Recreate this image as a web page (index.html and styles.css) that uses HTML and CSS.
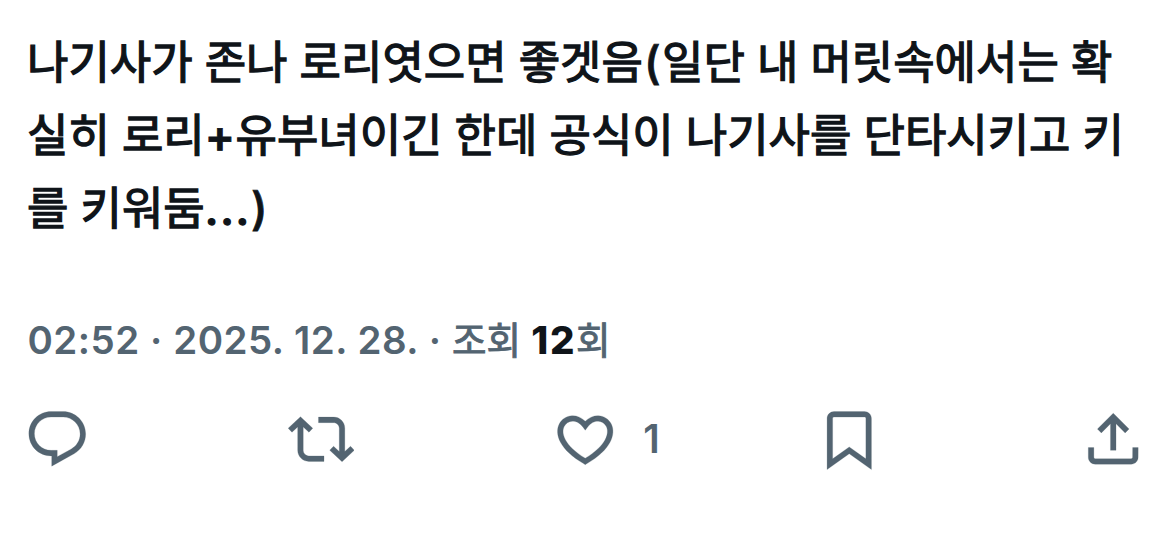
FILE: index.html
```html
<!DOCTYPE html>
<html lang="ko">
<head>
<meta charset="utf-8">
<title>Post</title>
<link rel="stylesheet" href="styles.css">
</head>
<body>
<article class="post">
  <p class="body"><span class="line">나기사가 존나 로리엿으면 좋겟음<span class="punct open">(</span>일단 내 머릿속에서는 확</span><span class="line">실히 로리<span class="punct plus">+</span>유부녀이긴 한데 공식이 나기사를 단타시키고 키</span><span class="line">를 키워둠<span class="punct dots">...</span><span class="punct">)</span></span></p>
  <div class="meta"><span class="date">02:52 · 2025. 12. 28. · </span><span class="ko">조회</span> <b>12</b><span class="ko">회</span></div>
  <div class="actions">
    <svg class="icon" viewBox="0 0 24 24"><path d="M1.751 10c0-4.42 3.584-8 8.005-8h4.366c4.49 0 8.129 3.64 8.129 8.13 0 2.96-1.607 5.68-4.196 7.11l-8.054 4.46v-3.69h-.067c-4.49.1-8.183-3.51-8.183-8.01zm8.005-6c-3.317 0-6.005 2.69-6.005 6 0 3.37 2.77 6.08 6.138 6.01l.351-.01h1.761v2.3l5.087-2.81c1.951-1.08 3.163-3.13 3.163-5.36 0-3.39-2.744-6.13-6.129-6.13H9.756z"/></svg>
    <svg class="icon" viewBox="0 0 24 24"><path d="M4.5 3.88l4.432 4.14-1.364 1.46L5.5 7.55V16c0 1.1.896 2 2 2H13v2H7.5c-2.209 0-4-1.79-4-4V7.55L1.432 9.48.068 8.02 4.5 3.88zM16.5 6H11V4h5.5c2.209 0 4 1.79 4 4v8.45l2.068-1.93 1.364 1.46-4.432 4.14-4.432-4.14 1.364-1.46 2.068 1.93V8c0-1.1-.896-2-2-2z"/></svg>
    <div class="like">
      <svg class="icon" viewBox="0 0 24 24"><path d="M16.697 5.5c-1.222-.06-2.679.51-3.89 2.16l-.805 1.09-.806-1.09C9.984 6.01 8.526 5.44 7.304 5.5c-1.243.07-2.349.78-2.91 1.91-.552 1.12-.633 2.78.479 4.82 1.074 1.97 3.257 4.27 7.129 6.61 3.87-2.34 6.052-4.64 7.126-6.61 1.111-2.04 1.03-3.7.477-4.82-.561-1.13-1.666-1.84-2.908-1.91zm4.187 7.69c-1.351 2.48-4.001 5.12-8.379 7.67l-.503.3-.504-.3c-4.379-2.55-7.029-5.19-8.382-7.67-1.36-2.5-1.41-4.86-.514-6.67.887-1.79 2.647-2.91 4.601-3.01 1.651-.09 3.368.56 4.798 2.01 1.429-1.45 3.146-2.1 4.796-2.01 1.954.1 3.714 1.22 4.601 3.01.896 1.81.846 4.17-.514 6.67z"/></svg>
      <span class="count">1</span>
    </div>
    <svg class="icon" viewBox="0 0 24 24"><path d="M4 4.5C4 3.12 5.119 2 6.5 2h11C18.881 2 20 3.12 20 4.5v18.44l-8-5.71-8 5.71V4.5zM6.5 4c-.276 0-.5.22-.5.5v14.56l6-4.29 6 4.29V4.5c0-.28-.224-.5-.5-.5h-11z"/></svg>
    <svg class="icon" viewBox="0 0 24 24"><path d="M12 2.59l5.7 5.7-1.41 1.42L13 6.41V16h-2V6.41l-3.3 3.3-1.41-1.42L12 2.59zM21 15l-.02 3.51c0 1.38-1.12 2.49-2.5 2.49H5.5C4.11 21 3 19.88 3 18.5V15h2v3.5c0 .28.22.5.5.5h12.98c.28 0 .5-.22.5-.5L19 15h2z"/></svg>
  </div>
</article>
</body>
</html>
```
FILE: styles.css
```css
body { margin: 0; background: #fff; }
.post { box-sizing: border-box; height: 553px; padding: 23px 22px 0 27px; overflow: hidden; }
.body {
  margin: 0;
  color: #0f1419;
  font: 400 45px/73px "Noto Sans CJK KR", sans-serif;
  -webkit-text-stroke: 1.3px #0f1419;
  word-spacing: -0.5px;
}
.line { display: block; height: 73px; white-space: nowrap; }
.punct { font-family: Inter, sans-serif; font-weight: 500; line-height: 1; -webkit-text-stroke: 0.8px #0f1419; }
.open { margin: 0 1.5px 0 1px; }
.plus { margin-right: 0.5px; font-weight: 600; }
.dots { letter-spacing: 1.8px; -webkit-text-stroke-width: 1.3px; }
.meta {
  margin-top: 69px;
  height: 54px;
  color: #536471;
  font: 600 38.5px/54px Inter, "Noto Sans CJK KR", sans-serif;
  letter-spacing: 0.45px;
  word-spacing: 0.3px;
  white-space: pre;
}
.date { margin-left: 0.5px; }
.meta b { color: #0f1419; font-weight: 800; letter-spacing: 1.6px; }
.ko { font: 400 37.5px/54px "Noto Sans CJK KR", sans-serif; -webkit-text-stroke: 0.9px #536471; letter-spacing: 0; }
.actions {
  display: grid;
  grid-template-columns: 264px 264px 264px 264px 68px;
  margin: 41px 0 0 -3.3px;
  height: 67px;
}
.icon { display: block; width: 66.5px; height: 66.5px; fill: #536471; stroke: #536471; stroke-width: 0.08; flex: none; }
.like { display: flex; align-items: center; height: 66.5px; gap: 25px; }
.count { color: #536471; font: 600 39px/66px Inter, sans-serif; }
```
